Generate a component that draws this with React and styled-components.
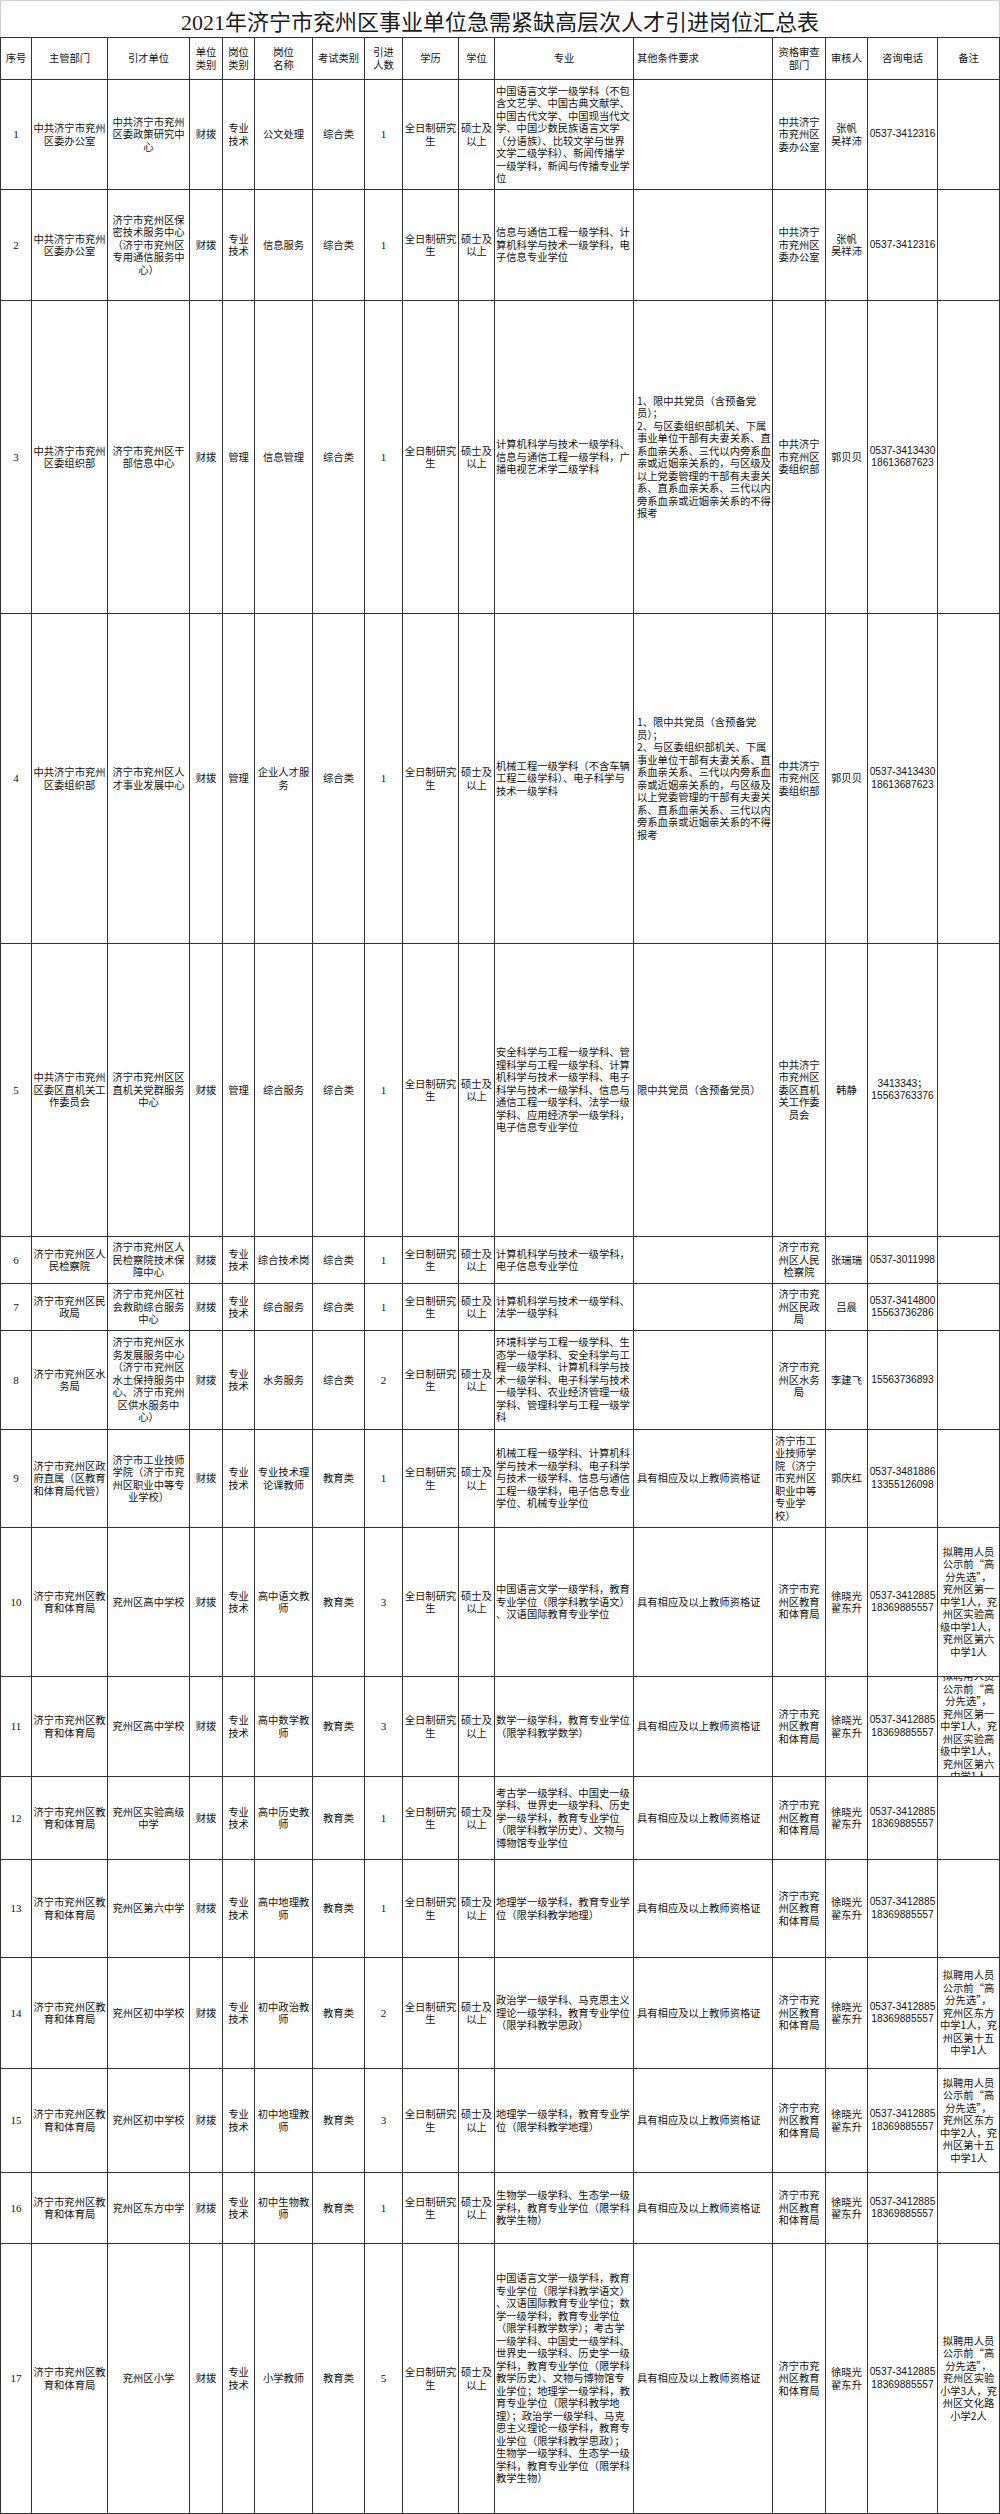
import React from 'react';
import styled, { createGlobalStyle } from 'styled-components';

const GlobalStyle = createGlobalStyle`
  html, body { margin: 0; padding: 0; background: #fff; }
  body { font-family: "Noto Sans CJK SC", sans-serif; color: #111; }
`;

const COLS = [31, 76, 82, 33, 32, 58, 52, 38, 56, 36, 139, 139, 53, 42, 70, 62];
const GRID = COLS.map((w) => `${w}px`).join(' ');

const Sheet = styled.div`
  width: 1000px;
`;

const Title = styled.div`
  box-sizing: border-box;
  height: 37px;
  border: 1px solid #cfd3d8;
  border-bottom: none;
  display: flex;
  align-items: center;
  justify-content: center;
  font-family: "Liberation Serif", "Noto Sans CJK SC", serif;
  font-size: 22px;
  color: #1a1a1a;
  padding-top: 2px;
`;

const Table = styled.div`
  border-top: 1px solid #333;
  border-left: 1px solid #333;
`;

const Row = styled.div`
  display: grid;
  grid-template-columns: ${GRID};
  height: ${(p) => p.$h}px;
`;

const Cell = styled.div`
  box-sizing: border-box;
  border-right: 1px solid #333;
  border-bottom: 1px solid #333;
  overflow: hidden;
  display: flex;
  flex-direction: column;
  justify-content: center;
  align-items: ${(p) => (p.$left ? 'flex-start' : 'center')};
  text-align: ${(p) => (p.$left ? 'left' : 'center')};
  padding: 0 ${(p) => (p.$pad != null ? p.$pad : 1)}px;
  font-size: 10.3px;
  line-height: 12.5px;
  color: #111;
`;

const NumCell = styled(Cell)`
  font-family: "Liberation Serif", serif;
  font-size: 11px;
`;

const PhoneCell = styled(Cell)`
  font-family: "Liberation Sans", "Noto Sans CJK SC", sans-serif;
  font-size: 10.2px;
  letter-spacing: 0;
`;

const Line = styled.span`
  display: block;
  white-space: pre;
`;

const Lines = ({ text }) =>
  text ? text.split('/').map((l, i) => <Line key={i}>{l}</Line>) : null;

const EDU = '济宁市兖州区教/育和体育局';
const EDU_REVIEW = '济宁市兖/州区教育/和体育局';
const EDU_PEOPLE = '徐晓光/翟东升';
const EDU_PHONE = '0537-3412885/18369885557';
const CERT = '具有相应及以上教师资格证';
const ORG_REQ =
  '1、限中共党员（含预备党/员）；/2、与区委组织部机关、下属/事业单位干部有夫妻关系、直/系血亲关系、三代以内旁系血/亲或近姻亲关系的，与区级及/以上党委管理的干部有夫妻关/系、直系血亲关系、三代以内/旁系血亲或近姻亲关系的不得/报考';
const NOTE_HIGH = '拟聘用人员/公示前“高/分先选”，/兖州区第一/中学1人，兖/州区实验高/级中学1人，/兖州区第六/中学1人';

const rows = [
  {
    h: 110, no: '1', dept: '中共济宁市兖州/区委办公室', unit: '中共济宁市兖州/区委政策研究中/心',
    post: '专业/技术', name: '公文处理', exam: '综合类', n: '1',
    major: '中国语言文学一级学科（不包/含文艺学、中国古典文献学、/中国古代文学、中国现当代文/学、中国少数民族语言文学/（分语族）、比较文学与世界/文学二级学科）、新闻传播学/一级学科，新闻与传播专业学/位',
    other: '', review: '中共济宁/市兖州区/委办公室', person: '张帆/吴祥沛', phone: '0537-3412316', note: '',
  },
  {
    h: 111, no: '2', dept: '中共济宁市兖州/区委办公室', unit: '济宁市兖州区保/密技术服务中心/（济宁市兖州区/专用通信服务中/心）',
    post: '专业/技术', name: '信息服务', exam: '综合类', n: '1',
    major: '信息与通信工程一级学科、计/算机科学与技术一级学科，电/子信息专业学位',
    other: '', review: '中共济宁/市兖州区/委办公室', person: '张帆/吴祥沛', phone: '0537-3412316', note: '',
  },
  {
    h: 313, no: '3', dept: '中共济宁市兖州/区委组织部', unit: '济宁市兖州区干/部信息中心',
    post: '管理', name: '信息管理', exam: '综合类', n: '1',
    major: '计算机科学与技术一级学科、/信息与通信工程一级学科，广/播电视艺术学二级学科',
    other: ORG_REQ, review: '中共济宁/市兖州区/委组织部', person: '郭贝贝', phone: '0537-3413430/18613687623', note: '',
  },
  {
    h: 330, no: '4', dept: '中共济宁市兖州/区委组织部', unit: '济宁市兖州区人/才事业发展中心',
    post: '管理', name: '企业人才服/务', exam: '综合类', n: '1',
    major: '机械工程一级学科（不含车辆/工程二级学科）、电子科学与/技术一级学科',
    other: ORG_REQ, review: '中共济宁/市兖州区/委组织部', person: '郭贝贝', phone: '0537-3413430/18613687623', note: '',
  },
  {
    h: 293, no: '5', dept: '中共济宁市兖州/区委区直机关工/作委员会', unit: '济宁市兖州区区/直机关党群服务/中心',
    post: '管理', name: '综合服务', exam: '综合类', n: '1',
    major: '安全科学与工程一级学科、管/理科学与工程一级学科、计算/机科学与技术一级学科、电子/科学与技术一级学科、信息与/通信工程一级学科、法学一级/学科、应用经济学一级学科，/电子信息专业学位',
    other: '限中共党员（含预备党员）', review: '中共济宁/市兖州区/委区直机/关工作委/员会', person: '韩静', phone: '3413343；/15563763376', note: '',
  },
  {
    h: 47, no: '6', dept: '济宁市兖州区人/民检察院', unit: '济宁市兖州区人/民检察院技术保/障中心',
    post: '专业/技术', name: '综合技术岗', exam: '综合类', n: '1',
    major: '计算机科学与技术一级学科，/电子信息专业学位',
    other: '', review: '济宁市兖/州区人民/检察院', person: '张瑞瑞', phone: '0537-3011998', note: '',
  },
  {
    h: 47, no: '7', dept: '济宁市兖州区民/政局', unit: '济宁市兖州区社/会救助综合服务/中心',
    post: '专业/技术', name: '综合服务', exam: '综合类', n: '1',
    major: '计算机科学与技术一级学科、/法学一级学科',
    other: '', review: '济宁市兖/州区民政/局', person: '吕晨', phone: '0537-3414800/15563736286', note: '',
  },
  {
    h: 99, no: '8', dept: '济宁市兖州区水/务局', unit: '济宁市兖州区水/务发展服务中心/（济宁市兖州区/水土保持服务中/心、济宁市兖州/区供水服务中/心）',
    post: '专业/技术', name: '水务服务', exam: '综合类', n: '2',
    major: '环境科学与工程一级学科、生/态学一级学科、安全科学与工/程一级学科、计算机科学与技/术一级学科、电子科学与技术/一级学科、农业经济管理一级/学科、管理科学与工程一级学/科',
    other: '', review: '济宁市兖/州区水务/局', person: '李建飞', phone: '15563736893', note: '',
  },
  {
    h: 98, no: '9', dept: '济宁市兖州区政/府直属（区教育/和体育局代管）', unit: '济宁市工业技师/学院（济宁市兖/州区职业中等专/业学校）',
    post: '专业/技术', name: '专业技术理/论课教师', exam: '教育类', n: '1',
    major: '机械工程一级学科、计算机科/学与技术一级学科、电子科学/与技术一级学科、信息与通信/工程一级学科，电子信息专业/学位、机械专业学位',
    other: CERT, review: '济宁市工/业技师学/院（济宁/市兖州区/职业中等/专业学/校）', reviewLeft: true,
    person: '郭庆红', phone: '0537-3481886/13355126098', note: '',
  },
  {
    h: 149, no: '10', dept: EDU, unit: '兖州区高中学校',
    post: '专业/技术', name: '高中语文教/师', exam: '教育类', n: '3',
    major: '中国语言文学一级学科，教育/专业学位（限学科教学语文）/、汉语国际教育专业学位',
    other: CERT, review: EDU_REVIEW, person: EDU_PEOPLE, phone: EDU_PHONE, note: NOTE_HIGH,
  },
  {
    h: 100, no: '11', dept: EDU, unit: '兖州区高中学校',
    post: '专业/技术', name: '高中数学教/师', exam: '教育类', n: '3',
    major: '数学一级学科，教育专业学位/（限学科教学数学）',
    other: CERT, review: EDU_REVIEW, person: EDU_PEOPLE, phone: EDU_PHONE, note: NOTE_HIGH,
  },
  {
    h: 83, no: '12', dept: EDU, unit: '兖州区实验高级/中学',
    post: '专业/技术', name: '高中历史教/师', exam: '教育类', n: '1',
    major: '考古学一级学科、中国史一级/学科、世界史一级学科、历史/学一级学科，教育专业学位/（限学科教学历史）、文物与/博物馆专业学位',
    other: CERT, review: EDU_REVIEW, person: EDU_PEOPLE, phone: EDU_PHONE, note: '',
  },
  {
    h: 98, no: '13', dept: EDU, unit: '兖州区第六中学',
    post: '专业/技术', name: '高中地理教/师', exam: '教育类', n: '1',
    major: '地理学一级学科，教育专业学/位（限学科教学地理）',
    other: CERT, review: EDU_REVIEW, person: EDU_PEOPLE, phone: EDU_PHONE, note: '',
  },
  {
    h: 111, no: '14', dept: EDU, unit: '兖州区初中学校',
    post: '专业/技术', name: '初中政治教/师', exam: '教育类', n: '2',
    major: '政治学一级学科、马克思主义/理论一级学科，教育专业学位/（限学科教学思政）',
    other: CERT, review: EDU_REVIEW, person: EDU_PEOPLE, phone: EDU_PHONE,
    note: '拟聘用人员/公示前“高/分先选”，/兖州区东方/中学1人，兖/州区第十五/中学1人',
  },
  {
    h: 104, no: '15', dept: EDU, unit: '兖州区初中学校',
    post: '专业/技术', name: '初中地理教/师', exam: '教育类', n: '3',
    major: '地理学一级学科，教育专业学/位（限学科教学地理）',
    other: CERT, review: EDU_REVIEW, person: EDU_PEOPLE, phone: EDU_PHONE,
    note: '拟聘用人员/公示前“高/分先选”，/兖州区东方/中学2人，兖/州区第十五/中学1人',
  },
  {
    h: 71, no: '16', dept: EDU, unit: '兖州区东方中学',
    post: '专业/技术', name: '初中生物教/师', exam: '教育类', n: '1',
    major: '生物学一级学科、生态学一级/学科，教育专业学位（限学科/教学生物）',
    other: CERT, review: EDU_REVIEW, person: EDU_PEOPLE, phone: EDU_PHONE, note: '',
  },
  {
    h: 270, no: '17', dept: EDU, unit: '兖州区小学',
    post: '专业/技术', name: '小学教师', exam: '教育类', n: '5',
    major: '中国语言文学一级学科，教育/专业学位（限学科教学语文）/、汉语国际教育专业学位；数/学一级学科，教育专业学位/（限学科教学数学）；考古学/一级学科、中国史一级学科、/世界史一级学科、历史学一级/学科，教育专业学位（限学科/教学历史）、文物与博物馆专/业学位；地理学一级学科，教/育专业学位（限学科教学地/理）；政治学一级学科、马克/思主义理论一级学科，教育专/业学位（限学科教学思政）；/生物学一级学科、生态学一级/学科，教育专业学位（限学科/教学生物）',
    other: CERT, review: EDU_REVIEW, person: EDU_PEOPLE, phone: EDU_PHONE,
    note: '拟聘用人员/公示前“高/分先选”，/兖州区实验/小学3人，兖/州区文化路/小学2人',
  },
];

const HEAD = [
  '序号', '主管部门', '引才单位', '单位/类别', '岗位/类别', '岗位/名称', '考试类别', '引进/人数',
  '学历', '学位', '专业', '其他条件要求', '资格审查/部门', '审核人', '咨询电话', '备注',
];

const HeaderRow = () => (
  <Row $h={42}>
    {HEAD.map((t, i) => (
      <Cell key={i} $left={i === 11} $pad={i === 11 ? 3 : 1}>
        <Lines text={t} />
      </Cell>
    ))}
  </Row>
);

const DataRow = ({ r }) => (
  <Row $h={r.h}>
    <NumCell>{r.no}</NumCell>
    <Cell><Lines text={r.dept} /></Cell>
    <Cell><Lines text={r.unit} /></Cell>
    <Cell><Lines text="财拨" /></Cell>
    <Cell><Lines text={r.post} /></Cell>
    <Cell><Lines text={r.name} /></Cell>
    <Cell><Lines text={r.exam} /></Cell>
    <NumCell>{r.n}</NumCell>
    <Cell><Lines text="全日制研究/生" /></Cell>
    <Cell><Lines text="硕士及/以上" /></Cell>
    <Cell $left $pad={1}><Lines text={r.major} /></Cell>
    <Cell $left $pad={3}><Lines text={r.other} /></Cell>
    <Cell $left={r.reviewLeft} $pad={r.reviewLeft ? 2 : 1}><Lines text={r.review} /></Cell>
    <Cell><Lines text={r.person} /></Cell>
    <PhoneCell><Lines text={r.phone} /></PhoneCell>
    <Cell><Lines text={r.note} /></Cell>
  </Row>
);

export default function App() {
  return (
    <>
      <GlobalStyle />
      <Sheet>
        <Title>2021年济宁市兖州区事业单位急需紧缺高层次人才引进岗位汇总表</Title>
        <Table>
          <HeaderRow />
          {rows.map((r) => (
            <DataRow key={r.no} r={r} />
          ))}
        </Table>
      </Sheet>
    </>
  );
}
